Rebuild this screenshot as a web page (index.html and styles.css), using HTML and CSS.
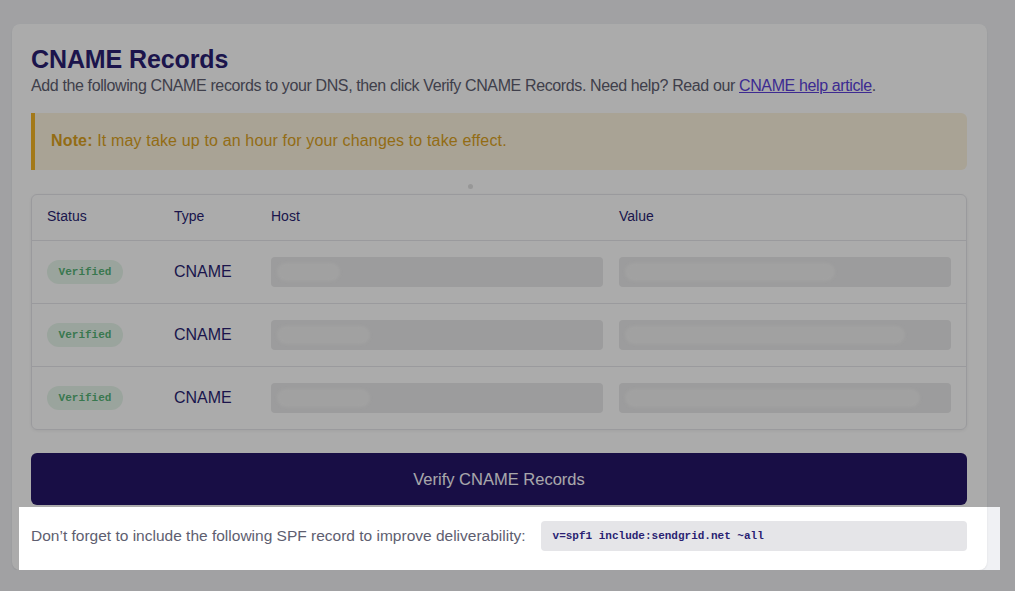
FILE: index.html
```html
<!DOCTYPE html>
<html><head>
<meta charset="UTF-8">
<title>CNAME Records</title>
<link rel="stylesheet" href="styles.css">
</head><body>
<div class="page">
<div class="card">
<h1 class="title">CNAME Records</h1>
<p class="lead">Add the following CNAME records to your DNS, then click Verify CNAME Records. Need help? Read our <a href="#">CNAME help article</a>.</p>

<div class="note"><b>Note:</b> It may take up to an hour for your changes to take effect.</div>

<div class="loader-dot"></div>

<div class="records">
  <div class="row head">
    <div>Status</div><div>Type</div><div>Host</div><div>Value</div>
  </div>
  <div class="row">
    <div><span class="badge">Verified</span></div>
    <div class="type">CNAME</div>
    <div class="skel"><span class="shine" style="width:63px"></span></div>
    <div class="skel"><span class="shine" style="width:210px"></span></div>
  </div>
  <div class="row">
    <div><span class="badge">Verified</span></div>
    <div class="type">CNAME</div>
    <div class="skel"><span class="shine" style="width:93px"></span></div>
    <div class="skel"><span class="shine" style="width:280px"></span></div>
  </div>
  <div class="row">
    <div><span class="badge">Verified</span></div>
    <div class="type">CNAME</div>
    <div class="skel"><span class="shine" style="width:93px"></span></div>
    <div class="skel"><span class="shine" style="width:295px"></span></div>
  </div>
</div>

<button class="verify">Verify CNAME Records</button>

<div class="spf">
  <span class="spf-label">Don’t forget to include the following SPF record to improve deliverability:</span>
  <code class="spf-code">v=spf1 include:sendgrid.net ~all</code>
</div>
</div>
</div>

<!-- tour spotlight over the SPF row -->
<div class="spotlight"></div>
</body></html>
```

FILE: styles.css
```css
body { margin: 0; background: #f0f1f4; font-family: "Liberation Sans", Arial, Helvetica, sans-serif; color: #5e5e70; }
.page { padding: 24px 0 0 12px; }

.card {
	width: 975px; box-sizing: border-box;
	background: #fff; border-radius: 8px;
	padding: 20px 20px 19px 19px;
	box-shadow: 0 1px 2px rgba(0,0,0,0.08);
	position: relative;
}

.title { margin: 0; font-size: 25px; line-height: 30px; font-weight: 700; color: #2a1f72; letter-spacing: -0.1px; }
.lead { margin: 0; font-size: 16px; line-height: 24px; letter-spacing: -0.38px; }
.lead a { color: #5b3fd9; }

.note {
	margin-top: 15px; padding: 16px 16px 17px 16px;
	background: #fcf3df; border-left: 4px solid #f4b526;
	border-radius: 0 6px 6px 0;
	font-size: 16px; line-height: 24px; color: #dba21e; letter-spacing: 0.15px;
}
.note b { font-weight: 700; }

.loader-dot {
	position: absolute; left: 456px; top: 160px;
	width: 5px; height: 5px; border-radius: 50%; background: #e2e2e2;
}

.records {
	margin-top: 24px;
	border: 1px solid #e6e6ea; border-radius: 6px;
	box-shadow: 0 1px 3px rgba(0,0,0,0.06);
}
.row {
	display: grid; grid-template-columns: 111px 81px 1fr 1fr;
	column-gap: 16px; align-items: center;
	padding: 16px 15px; height: 30px;
	border-top: 1px solid #e6e6ea;
}
.row.head { border-top: none; height: 42px; padding: 0 15px 3px 15px; font-size: 14px; color: #2a1f72; }
.type { font-size: 16px; color: #2a1f72; }

.badge {
	display: inline-block; width: 76px; height: 24px; line-height: 24px;
	border-radius: 12px; background: #e6f5ea; text-align: center;
	font-family: "Liberation Mono", "Courier New", monospace; font-size: 11px; font-weight: 700; color: #56b377;
}

.skel {
	height: 30px; border-radius: 4px; background: #e9e9ea;
	display: flex; align-items: center; padding: 0 6px; box-sizing: border-box;
}
.shine { display: block; height: 18px; border-radius: 9px; background: #f1f1f1; filter: blur(1.5px); }

.verify {
	display: block; width: 100%; height: 52px; margin-top: 23px;
	border: none; border-radius: 6px; background: #241567;
	color: #fbfaff; font-family: inherit; font-size: 16.5px;
}

.spf { margin-top: 16px; display: flex; align-items: center; gap: 15px; }
.spf-label { font-size: 15.5px; white-space: nowrap; }
.spf-code {
	flex: 1; height: 30px; line-height: 30px; padding: 0 12px;
	background: #e5e5e8; border-radius: 4px;
	font-family: "Liberation Mono", "Courier New", monospace; font-size: 11px; font-weight: 700; color: #2a1f72;
}

.spotlight {
	position: fixed; left: 19px; top: 507px; width: 981px; height: 63px;
	box-shadow: 0 0 0 3000px rgba(0,0,0,0.33);
	pointer-events: none;
}
```
